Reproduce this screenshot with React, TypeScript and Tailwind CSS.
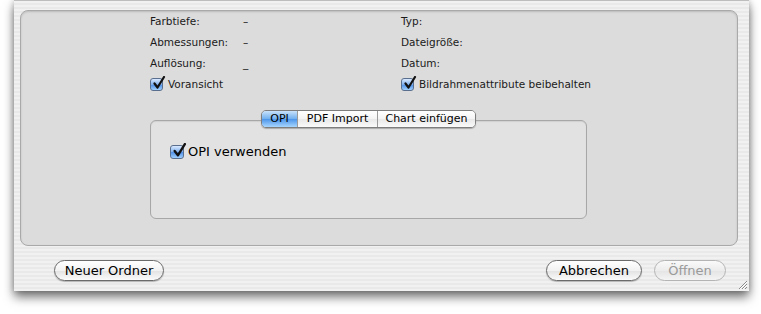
import React from "react";

function Check({ size = 13 }: { size?: number }) {
  return (
    <span
      className="relative inline-block shrink-0 rounded-[3px] border border-[#5a6f8e] bg-[linear-gradient(#dbeaff,#7fb0ee_50%,#4d8ee6_51%,#9fd0ff)]"
      style={{ width: size, height: size }}
    >
      <svg
        viewBox="0 0 14 14"
        className="absolute left-[1px] top-[-3px]"
        width={size + 1}
        height={size + 1}
      >
        <path d="M2.5 7.5 L5.5 11.5 L12 1" fill="none" stroke="#111" strokeWidth="2.2" strokeLinecap="round" strokeLinejoin="round" />
      </svg>
    </span>
  );
}

function AquaButton({ label, disabled = false, w }: { label: string; disabled?: boolean; w: string }) {
  return (
    <div
      className={`${w} h-[21px] flex items-center justify-center rounded-full text-[13px] ${
        disabled
          ? "border border-[#b4b4b4] text-[#9a9a9a] bg-[linear-gradient(#fafafa,#ececec_50%,#e4e4e4_51%,#f4f4f4)]"
          : "border border-[#6b6b6b] text-black bg-[linear-gradient(#ffffff,#f2f2f2_50%,#e2e2e2_51%,#fbfbfb)] shadow-[0_1px_1px_rgba(0,0,0,0.25)]"
      }`}
    >
      {label}
    </div>
  );
}

export default function App() {
  const font = { fontFamily: '"DejaVu Sans", "Liberation Sans", sans-serif' };
  return (
    <div className="w-[761px] h-[314px] bg-white overflow-hidden" style={font}>
      <div className="ml-[14px] w-[735px] h-[291px] border-t border-[#bdbdbd] bg-[repeating-linear-gradient(#f1f1f1_0px,#f1f1f1_2px,#e9e9e9_2px,#e9e9e9_4px)] shadow-[0_6px_10px_rgba(0,0,0,0.55),0_0_6px_rgba(0,0,0,0.2)] relative flex flex-col">
        <div className="mt-[9px] ml-[6px] w-[718px] h-[236px] rounded-[8px] border border-[#a9a9a9] bg-[#dcdcdc] shadow-[inset_0_1px_2px_rgba(0,0,0,0.15)] flex flex-col">
          <div className="ml-[129px] mt-0 grid grid-cols-[93px_158px_auto] text-[10.5px] text-[#1a1a1a] leading-[21px]">
            <div>Farbtiefe:</div>
            <div>–</div>
            <div>Typ:</div>
            <div>Abmessungen:</div>
            <div>–</div>
            <div>Dateigröße:</div>
            <div>Auflösung:</div>
            <div>_</div>
            <div>Datum:</div>
            <div className="col-span-2 flex items-center gap-[5px] h-[21px]">
              <Check />
              <span>Voransicht</span>
            </div>
            <div className="flex items-center gap-[5px] h-[21px]">
              <Check />
              <span>Bildrahmenattribute beibehalten</span>
            </div>
          </div>
          <div className="ml-[129px] mt-[15px] w-[437px] relative">
            <div className="h-[99px] mt-[10px] rounded-[6px] border border-[#a7a7a7] bg-[#e2e2e2] shadow-[inset_0_1px_1px_rgba(0,0,0,0.08)]">
              <div className="mt-[21px] ml-[19px] flex items-center gap-[4px] text-[13px] text-black">
                <Check size={14} />
                <span>OPI verwenden</span>
              </div>
            </div>
            <div className="absolute top-0 left-0 right-0 flex justify-center">
              <div className="flex h-[18px] rounded-[5px] border border-[#7d7d7d] overflow-hidden text-[11px] shadow-[0_1px_1px_rgba(0,0,0,0.25)]">
                <div className="w-[35px] flex items-center justify-center text-black bg-[linear-gradient(#c9e2fb,#6faeef_50%,#4c95ea_51%,#a6d6ff)]">OPI</div>
                <div className="w-[80px] flex items-center justify-center border-l border-[#9a9a9a] bg-[linear-gradient(#ffffff,#f4f4f4_50%,#e8e8e8_51%,#fafafa)]">PDF Import</div>
                <div className="w-[98px] flex items-center justify-center border-l border-[#9a9a9a] bg-[linear-gradient(#ffffff,#f4f4f4_50%,#e8e8e8_51%,#fafafa)]">Chart einfügen</div>
              </div>
            </div>
          </div>
        </div>
        <div className="mt-[14px] ml-[40px] mr-[23px] flex items-center">
          <AquaButton label="Neuer Ordner" w="w-[110px]" />
          <div className="flex-1" />
          <AquaButton label="Abbrechen" w="w-[96px]" />
          <div className="w-[12px]" />
          <AquaButton label="Öffnen" disabled w="w-[72px]" />
        </div>
        <svg className="absolute right-[1px] bottom-[1px]" width="11" height="11" viewBox="0 0 11 11">
          <path d="M10 2 L2 10 M10 5 L5 10 M10 8 L8 10" stroke="#8a8a8a" strokeWidth="1" />
          <path d="M10 3 L3 10 M10 6 L6 10" stroke="#ffffff" strokeWidth="1" />
        </svg>
      </div>
    </div>
  );
}
